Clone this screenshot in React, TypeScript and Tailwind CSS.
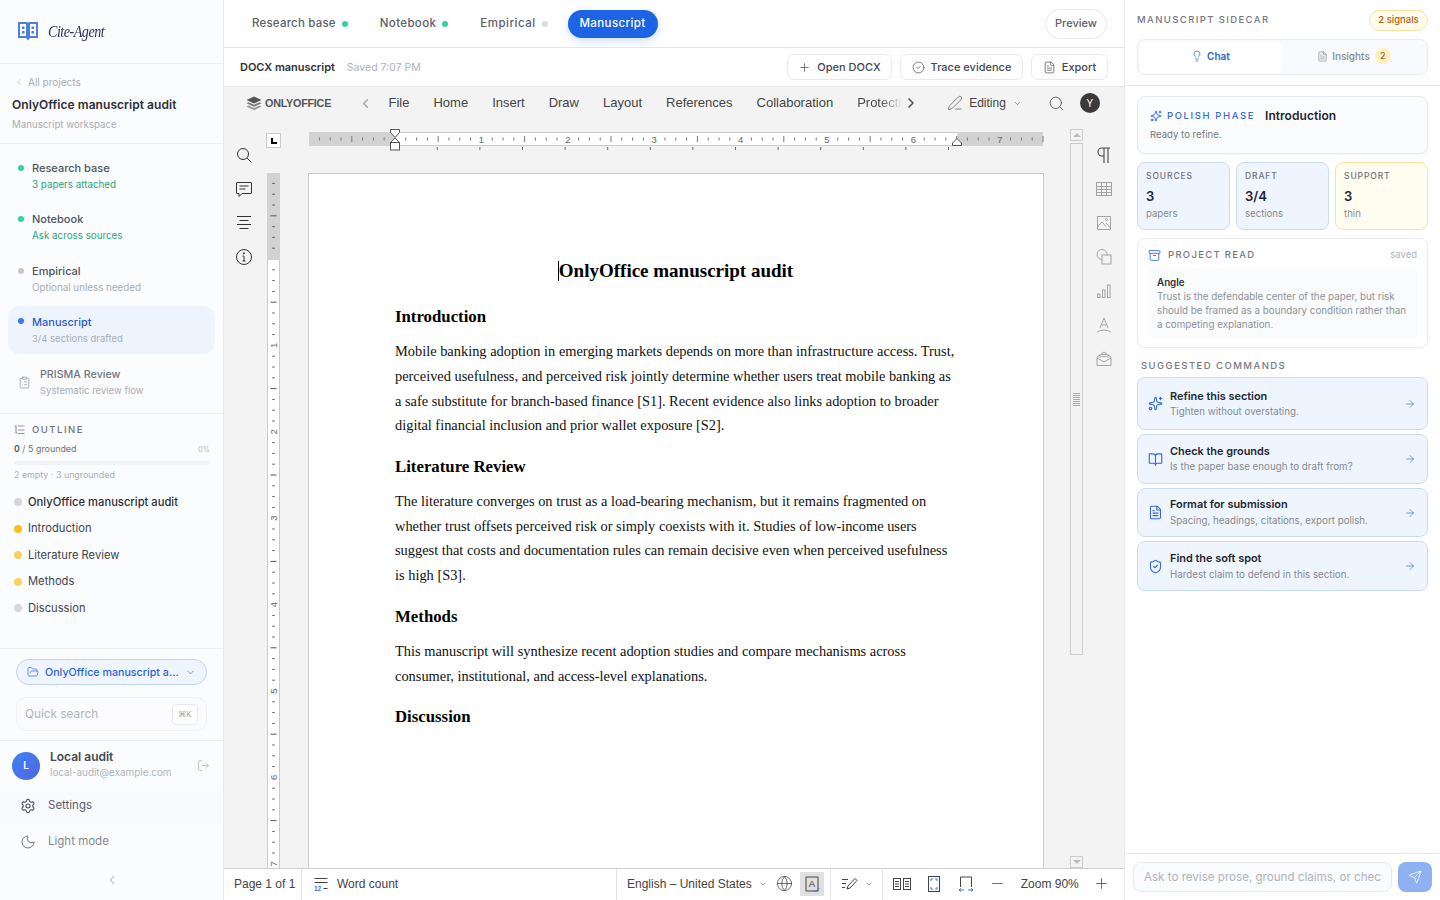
import React from "react";
import {
  ChevronLeft, ChevronRight, ChevronDown, ClipboardList, FolderOpen, LogOut, Settings, Moon, Plus, CircleCheck,
  FileText, Search, Lightbulb, Sparkles, Archive, BookOpen, ArrowRight, ShieldCheck, Send, PenLine, Globe, Minus,
} from "lucide-react";

const tickColor = "#777";

function HRuler() {
  const ticks: React.ReactNode[] = [];
  for (let k = -7; k <= 60; k++) {
    const x = 86 + k * 10.8;
    if (k === 0) continue;
    const m = ((k % 8) + 8) % 8;
    if (m === 0) {
      ticks.push(<text key={k} x={x} y={15.5} textAnchor="middle" fontSize="9.5" fill="#666" fontFamily="Liberation Sans, sans-serif">{k / 8}</text>);
    } else {
      const h = m === 4 ? 6 : 3;
      ticks.push(<line key={k} x1={x} x2={x} y1={12 - h / 2} y2={12 + h / 2} stroke={tickColor} strokeWidth="1" />);
    }
  }
  const tabs: React.ReactNode[] = [];
  for (let m = 0; m <= 12; m++) {
    const x = 128.3 + m * 42.6;
    tabs.push(<line key={m} x1={x} x2={x} y1={20} y2={23} stroke="#666" strokeWidth="1" />);
  }
  return (
    <svg width="736" height="30" viewBox="0 0 736 30" className="block overflow-visible">
      <rect x="0.5" y="5.5" width="733" height="13" fill="#fff" stroke="#cbcbcb" />
      <rect x="0" y="5" width="86" height="14" fill="#d2d2d2" />
      <rect x="648" y="5" width="86" height="14" fill="#d2d2d2" />
      {ticks}
      {tabs}
      <path d="M81.5 2.5h9v3l-4.5 5l-4.5-5z M86 11l4.5 4.5v0h-9z" fill="#fff" stroke="#555" />
      <rect x="81.5" y="15.5" width="9" height="7.5" fill="#fff" stroke="#555" />
      <path d="M648 11.5l4.5 4.5v2.500h-9v-2.500z" fill="#fff" stroke="#555" />
    </svg>
  );
}

function VRuler() {
  const ticks: React.ReactNode[] = [];
  for (let k = -7; k <= 56; k++) {
    const y = 86 + k * 10.8;
    if (k === 0) continue;
    const m = ((k % 8) + 8) % 8;
    if (m === 0) {
      ticks.push(<text key={k} x={0} y={0} transform={`translate(9.5 ${y}) rotate(-90)`} textAnchor="middle" fontSize="9.5" fill="#666" fontFamily="Liberation Sans, sans-serif">{k / 8}</text>);
    } else {
      const w = m === 4 ? 6 : 2.5;
      ticks.push(<line key={k} x1={6.5 - w / 2} x2={6.5 + w / 2} y1={y} y2={y} stroke="#555" strokeWidth="1" />);
    }
  }
  return (
    <svg width="13" height="696" viewBox="0 0 13 696" className="block">
      <rect x="0.5" y="0" width="12" height="696" fill="#fff" stroke="#cbcbcb" />
      <rect x="0" y="0" width="13" height="87" fill="#d2d2d2" />
      {ticks}
    </svg>
  );
}

const ic = { fill: "none", stroke: "#555", strokeWidth: 1 } as const;

function RailIcon({ children, faded }: { children: React.ReactNode; faded?: boolean }) {
  return (
    <svg width="20" height="20" viewBox="0 0 20 20" className={faded ? "opacity-50" : ""} {...ic}>
      {children}
    </svg>
  );
}

const NAV = [
  { t: "Research base", s: "3 papers attached", c: "bg-[#34d399]", sc: "text-[#2aa57c]", tc: "text-[#4b5563]" },
  { t: "Notebook", s: "Ask across sources", c: "bg-[#34d399]", sc: "text-[#2aa57c]", tc: "text-[#4b5563]" },
  { t: "Empirical", s: "Optional unless needed", c: "bg-[#c4c6cc]", sc: "text-[#a8adb5]", tc: "text-[#4b5563]" },
];

const OUTLINE = [
  { t: "OnlyOffice manuscript audit", c: "bg-[#d5d7dc]", b: true },
  { t: "Introduction", c: "bg-[#fbbf24]" },
  { t: "Literature Review", c: "bg-[#fcd05c]" },
  { t: "Methods", c: "bg-[#fcd05c]" },
  { t: "Discussion", c: "bg-[#d5d7dc]" },
];

function Sidebar() {
  return (
    <aside className="w-[224px] h-[900px] shrink-0 bg-[#fbfcfe] border-r border-[#e8eaee] flex flex-col">
      <div className="h-[64px] shrink-0 border-b border-[#eceef2] flex items-center pl-[17px] gap-[9px]">
        <svg width="22" height="22" viewBox="0 0 22 22" className="mt-[-1px]">
          <path d="M1 2h8.5c.8 0 1.5.5 1.5 1.2C11 2.500 11.700 2 12.500 2H21v16h-8l-2 2.500L9 18H1z" fill="#4a7fdc" />
          <rect x="3" y="4" width="6" height="12" fill="#fff" />
          <rect x="13" y="4" width="6" height="12" fill="#fff" />
          <rect x="5" y="6.500" width="2.500" height="2.500" fill="#4a7fdc" />
          <rect x="5" y="11" width="2.500" height="2.500" fill="#4a7fdc" />
          <rect x="14.500" y="6.500" width="2.500" height="2.500" fill="#4a7fdc" />
          <rect x="14.500" y="11" width="2.500" height="2.500" fill="#4a7fdc" />
        </svg>
        <span className="[font-family:'Liberation_Serif',serif] italic text-[17px] text-[#2c3258] tracking-[-0.6px] scale-x-[0.83] origin-left">Cite-Agent</span>
      </div>
      <div className="h-[80px] shrink-0 border-b border-[#eceef2] pl-[12px] pt-[11px]">
        <div className="flex items-center gap-[4px] h-[14px] pl-[2px] text-[10px] text-[#a8adb5]">
          <ChevronLeft size={10} strokeWidth={1.5} />
          <span>All projects</span>
        </div>
        <div className="mt-[8px] text-[12px] leading-[16px] font-semibold text-[#2b2f38] tracking-[0.05px]">OnlyOffice manuscript audit</div>
        <div className="mt-[5px] text-[9.700px] leading-[14px] text-[#a8adb5]">Manuscript workspace</div>
      </div>
      <div className="h-[270px] shrink-0 border-b border-[#eceef2] px-[8px] pt-[16px] flex flex-col">
        {NAV.map((n) => (
          <div key={n.t} className="h-[51.300px] shrink-0 flex pl-[10px] pt-[1px]">
            <span className={`w-[6px] h-[6px] rounded-full mt-[4px] ${n.c}`} />
            <div className="ml-[8px]">
              <div className={`text-[11px] leading-[15px] font-medium ${n.tc}`}>{n.t}</div>
              <div className={`mt-[1px] text-[9.800px] leading-[15px] ${n.sc}`}>{n.s}</div>
            </div>
          </div>
        ))}
        <div className="h-[48px] shrink-0 rounded-[12px] bg-[#edf4fe] flex pl-[10px] pt-[9px] mt-[-8px]">
          <span className="w-[6px] h-[6px] rounded-full mt-[3px] bg-[#3b78ee]" />
          <div className="ml-[8px]">
            <div className="text-[11px] leading-[15px] font-medium text-[#2a5ccf]">Manuscript</div>
            <div className="mt-[1px] text-[9.500px] leading-[15px] text-[#a8adb5]">3/4 sections drafted</div>
          </div>
        </div>
        <div className="flex items-center pl-[10px] mt-[13px] gap-[9px]">
          <ClipboardList size={13} strokeWidth={1.3} className="text-[#8d929b]" />
          <div>
            <div className="text-[10.700px] leading-[15px] font-medium text-[#70757e]">PRISMA Review</div>
            <div className="mt-[1px] text-[9.500px] leading-[15px] text-[#a8adb5]">Systematic review flow</div>
          </div>
        </div>
      </div>
      <div className="h-[235px] shrink-0 border-b border-[#eceef2] px-[14px] pt-[9px]">
        <div className="flex items-center gap-[7px] h-[14px]">
          <svg width="11" height="10" viewBox="0 0 11 10" fill="none" stroke="#8d929b" strokeWidth="1.100">
            <path d="M0.500 1h2M4 1h6.500M2 1v7h1.500M4 5h6.500M4 8.500h6.500" />
          </svg>
          <span className="text-[9.500px] font-medium tracking-[1.500px] text-[#6d727b]">OUTLINE</span>
        </div>
        <div className="flex items-end justify-between mt-[4px] h-[14px]">
          <span className="text-[8.900px] text-[#6d727b]"><span className="font-semibold text-[#555a63]">0</span> / 5 grounded</span>
          <span className="text-[7.5px] text-[#b5b9c0] mr-[-1px]">0%</span>
        </div>
        <div className="h-[4px] rounded-full bg-[#f0f1f4] mt-[6px] mr-0" />
        <div className="text-[8.900px] leading-[14px] text-[#a8adb5] mt-[3px]">2 empty · 3 ungrounded</div>
        <div className="mt-[7px] flex flex-col">
          {OUTLINE.map((o) => (
            <div key={o.t} className="h-[26.500px] flex items-center gap-[6px]">
              <span className={`w-[8px] h-[8px] rounded-full ${o.c}`} />
              <span className={`text-[11.200px] ${o.b ? "font-medium text-[#2b2f38]" : "text-[#3f444d]"}`}>{o.t}</span>
            </div>
          ))}
        </div>
      </div>
      <div className="h-[92px] shrink-0 border-b border-[#eceef2] px-[16px] pt-[10px]">
        <div className="h-[26px] rounded-full border border-[#bfd4f6] bg-[#eff5fe] flex items-center pl-[10px] pr-[10px] gap-[6px]">
          <FolderOpen size={12} strokeWidth={1.5} className="text-[#3f72d8]" />
          <span className="flex-1 text-[10.700px] pt-[2px] font-medium text-[#2f62cf] whitespace-nowrap">OnlyOffice manuscript a...</span>
          <ChevronDown size={11} strokeWidth={1.5} className="text-[#3f72d8]" />
        </div>
        <div className="h-[34px] mt-[12px] rounded-[10px] border border-[#f1f2f5] bg-[#fbfbfd] flex items-center justify-between pl-[8px] pr-[8px]">
          <span className="text-[11.800px] pt-[2px] text-[#b0b4bb]">Quick search</span>
          <span className="w-[26px] h-[21px] rounded-[4px] border border-[#e5e7eb] bg-white flex items-center justify-center text-[8px] text-[#a0a4ac]">⌘K</span>
        </div>
      </div>
      <div className="flex-1 relative">
        <div className="flex items-center pl-[12px] pr-[13px] pt-[10px]">
          <div className="w-[28px] h-[28px] rounded-full bg-gradient-to-br from-[#3b82f6] to-[#4f66e0] flex items-center justify-center text-white text-[10px] font-semibold">L</div>
          <div className="ml-[10px] flex-1 mt-[-2px]">
            <div className="text-[12px] leading-[15px] font-semibold text-[#444851]">Local audit</div>
            <div className="text-[9.900px] leading-[15px] mt-[1px] text-[#b0b4bb]">local-audit@example.com</div>
          </div>
          <LogOut size={13} strokeWidth={1.3} className="text-[#a8adb5]" />
        </div>
        <div className="mt-[8px] h-[36px] flex items-center pl-[20px] gap-[12px] bg-[#f9fafd]">
          <Settings size={16} strokeWidth={1.6} className="text-[#454a54]" />
          <span className="text-[11.500px] text-[#5b6069]">Settings</span>
        </div>
        <div className="h-[36px] flex items-center pl-[20px] gap-[12px]">
          <Moon size={16} strokeWidth={1.5} className="text-[#70757e]" />
          <span className="text-[11.500px] text-[#85898f]">Light mode</span>
        </div>
        <div className="flex justify-center mt-[13px]">
          <ChevronLeft size={14} strokeWidth={1.5} className="text-[#8d929b]" />
        </div>
      </div>
    </aside>
  );
}

function TopBar() {
  return (
    <div className="h-[48px] shrink-0 border-b border-[#e6e7ea] flex items-center justify-between pl-[28px] pr-[17px]">
      <div className="flex items-center text-[11.500px] font-medium text-[#5b6069] tracking-[0.2px]">
        <span>Research base</span>
        <span className="w-[6px] h-[6px] rounded-full bg-[#34d399] ml-[6px]" />
        <span className="ml-[32px] tracking-[0.35px]">Notebook</span>
        <span className="w-[6px] h-[6px] rounded-full bg-[#34d399] ml-[6px]" />
        <span className="ml-[32px] tracking-[0.5px]">Empirical</span>
        <span className="w-[6px] h-[6px] rounded-full bg-[#dadbdf] ml-[6px]" />
        <span className="ml-[20px] h-[28px] w-[90px] flex items-center justify-center rounded-full bg-[#1d63e4] text-white tracking-[0.4px] shadow-[0_3px_8px_rgba(29,99,228,0.22)]">Manuscript</span>
      </div>
      <span className="h-[30px] w-[62px] flex items-center justify-center rounded-full border border-[#e5e7eb] text-[11px] font-medium text-[#5b6069]">Preview</span>
    </div>
  );
}

function SubBar() {
  const btn = "h-[26px] rounded-[7px] border border-[#e8e9ec] flex items-center justify-center gap-[6px] text-[11px] font-medium text-[#43474f]";
  return (
    <div className="h-[39px] shrink-0 border-b border-[#e6e7ea] flex items-center justify-between pl-[16px] pr-[16px]">
      <div className="flex items-baseline gap-[12px]">
        <span className="text-[11px] font-semibold text-[#30343c] tracking-[-0.03px]">DOCX manuscript</span>
        <span className="text-[10.500px] text-[#adb1b8]">Saved 7:07 PM</span>
      </div>
      <div className="flex items-center gap-[8px]">
        <span className={`${btn} w-[105px]`}><Plus size={13} strokeWidth={1.5} className="text-[#5b6069]" />Open DOCX</span>
        <span className={`${btn} w-[123px]`}><CircleCheck size={13} strokeWidth={1.3} className="text-[#43474f]" />Trace evidence</span>
        <span className={`${btn} w-[77px]`}><FileText size={13} strokeWidth={1.3} className="text-[#43474f]" />Export</span>
      </div>
    </div>
  );
}

function EditorTabs() {
  return (
    <div className="h-[32px] shrink-0 flex items-center pl-[22px] [font-family:'Liberation_Sans',sans-serif] text-[13px] text-[#444]">
      <div className="w-[113px] flex items-center gap-[3px]">
        <svg width="16" height="15" viewBox="0 0 16 15">
          <path d="M8 0.500L15.500 4L8 7.500L0.500 4z" fill="#555" />
          <path d="M2.500 6.300L0.500 7.300L8 10.800L15.500 7.300L13.500 6.300L8 8.800z" fill="#777" />
          <path d="M2.500 9.600L0.500 10.600L8 14.200L15.500 10.600L13.500 9.600L8 12.100z" fill="#999" />
        </svg>
        <span className="text-[10.800px] font-bold text-[#555] tracking-[-0.25px]">ONLYOFFICE</span>
      </div>
      <ChevronLeft size={15} strokeWidth={2.500} className="text-[#aaa] mr-[15.500px] ml-[-1px]" />
      <div className="flex items-center gap-[24px]">
        <span>File</span><span>Home</span><span>Insert</span><span>Draw</span><span>Layout</span><span>References</span><span>Collaboration</span>
        <span className="w-[45px] whitespace-nowrap bg-gradient-to-r from-[#444] from-50% to-[#f3f3f3] bg-clip-text text-transparent">Protecti</span>
      </div>
      <ChevronRight size={16} strokeWidth={2.500} className="text-[#555] ml-[1px]" />
      <PenLine size={16} strokeWidth={1} className="text-[#444] ml-[28px]" />
      <span className="ml-[6px] text-[12px]">Editing</span>
      <ChevronDown size={9} strokeWidth={1.500} className="ml-[7.500px] text-[#555]" />
      <Search size={17} strokeWidth={1} className="ml-[26px] text-[#333]" />
      <span className="ml-[14.500px] w-[20px] h-[20px] rounded-full bg-[#3a3a3a] text-white text-[10px] flex items-center justify-center">Y</span>
    </div>
  );
}

function DocHeading({ children, cls }: { children: React.ReactNode; cls: string }) {
  return <div className={`text-[16.800px] leading-[24px] font-bold text-black ${cls}`}>{children}</div>;
}

function Paragraph({ lines, cls }: { lines: string[]; cls: string }) {
  return (
    <div className={`${cls} text-[14.400px] leading-[24.670px] text-[#111]`}>
      {lines.map((l) => <div key={l} className="whitespace-nowrap">{l}</div>)}
    </div>
  );
}

function Page() {
  return (
    <div className="w-[736px] h-[760px] shrink-0 bg-white border border-[#cbcbcb] pl-[86px] [font-family:'Liberation_Serif',serif] relative">
      <div className="text-[19px] leading-[24px] font-bold text-black text-center pr-[86px] mt-[85px] relative">
        OnlyOffice manuscript audit
        <span className="absolute left-[163px] top-[2px] w-px h-[20px] bg-black" />
      </div>
      <DocHeading cls="mt-[22px]">Introduction</DocHeading>
      <Paragraph cls="mt-[10.300px]" lines={[
        "Mobile banking adoption in emerging markets depends on more than infrastructure access. Trust,",
        "perceived usefulness, and perceived risk jointly determine whether users treat mobile banking as",
        "a safe substitute for branch-based finance [S1]. Recent evidence also links adoption to broader",
        "digital financial inclusion and prior wallet exposure [S2].",
      ]} />
      <DocHeading cls="mt-[17.020px]">Literature Review</DocHeading>
      <Paragraph cls="mt-[10px]" lines={[
        "The literature converges on trust as a load-bearing mechanism, but it remains fragmented on",
        "whether trust offsets perceived risk or simply coexists with it. Studies of low-income users",
        "suggest that costs and documentation rules can remain decisive even when perceived usefulness",
        "is high [S3].",
      ]} />
      <DocHeading cls="mt-[17.320px]">Methods</DocHeading>
      <Paragraph cls="mt-[10px]" lines={[
        "This manuscript will synthesize recent adoption studies and compare mechanisms across",
        "consumer, institutional, and access-level explanations.",
      ]} />
      <DocHeading cls="mt-[16.660px]">Discussion</DocHeading>
    </div>
  );
}

function RightRail() {
  return (
    <div className="w-[40px] shrink-0 flex flex-col items-center pt-[26px] gap-[14px]">
      <svg width="20" height="20" viewBox="0 0 20 20" fill="none" stroke="#444" strokeWidth="1.100">
        <path d="M16 3H8a4 4 0 0 0 0 8h2M10 3v15M14 3v15" />
      </svg>
      <RailIcon faded><rect x="2.500" y="3.500" width="15" height="13" /><path d="M2.500 7.500h15M2.500 10.500h15M2.500 13.500h15M7.500 3.500v13M12.500 3.500v13" /></RailIcon>
      <RailIcon faded><rect x="3.500" y="3.500" width="13" height="13" /><path d="M3.500 14l4.500-5 4 4.500M12 10l4.500 5" /><circle cx="12.500" cy="6.500" r="1" /></RailIcon>
      <RailIcon faded><circle cx="8" cy="7.500" r="5" /><rect x="8" y="8" width="9" height="9" fill="#f3f3f3" /></RailIcon>
      <RailIcon faded><rect x="3.500" y="13" width="2.500" height="3.500" /><rect x="8.500" y="9" width="2.500" height="7.500" /><rect x="13.500" y="4" width="2.500" height="12.500" /></RailIcon>
      <RailIcon faded><path d="M6 13l4-10 4 10M7.500 10h5M3 17c4-2.500 10-2.500 14 0" /></RailIcon>
      <RailIcon faded><path d="M3 8l7-5 7 5v8.500H3zM3 9l7 4 7-4" /><path d="M6 9V5.500h8V9M7.500 7.500h5" /></RailIcon>
    </div>
  );
}

function ScrollBar() {
  return (
    <div className="w-[13px] shrink-0 h-[739px] flex flex-col items-stretch ml-[26px] mt-[-44px]">
      <div className="h-[12px] border border-[#cbcbcb] flex items-center justify-center">
        <span className="border-x-[4px] border-x-transparent border-b-[4px] border-b-[#bbb]" />
      </div>
      <div className="h-[512px] mt-[2px] border border-[#cbcbcb] flex items-center justify-center">
        <span className="w-[7px] h-[13px] bg-[repeating-linear-gradient(to_bottom,#aaa_0,#aaa_1px,transparent_1px,transparent_2px)]" />
      </div>
      <div className="flex-1" />
      <div className="h-[12px] border border-[#cbcbcb] flex items-center justify-center">
        <span className="border-x-[4px] border-x-transparent border-t-[4px] border-t-[#bbb]" />
      </div>
    </div>
  );
}

function Editor() {
  return (
    <div className="flex-1 min-h-0 bg-[#f3f3f3] flex flex-col overflow-hidden">
      <EditorTabs />
      <div className="flex-1 min-h-0 flex overflow-hidden">
        <div className="w-[40px] shrink-0 flex flex-col items-center pt-[26px] gap-[14px] text-[#444]">
          <RailIcon><circle cx="9" cy="9" r="5.500" stroke="#333" /><path d="M13 13l4.500 4.500" stroke="#333" /></RailIcon>
          <RailIcon><path d="M3 3.500h14a.5.5 0 0 1 .5.5v10a.5.5 0 0 1-.5.5H8L5 17.500v-3H3a.5.5 0 0 1-.5-.5V4a.5.5 0 0 1 .5-.5zM5.500 7h9M5.500 10h6" stroke="#333" /></RailIcon>
          <RailIcon><path d="M3 3.500h14M5.500 7.500h9M3 11.500h14M5.500 15.500h9" stroke="#333" /></RailIcon>
          <RailIcon><circle cx="10" cy="10" r="7.500" stroke="#333" /><path d="M10 9v5M8.500 9H10M8.500 14h3" stroke="#333" /><circle cx="10" cy="6.300" r=".6" fill="#333" stroke="#333" /></RailIcon>
        </div>
        <div className="flex-1 min-w-0 flex flex-col">
          <div className="flex h-[54px] shrink-0">
            <div className="w-[15px] h-[15px] mt-[14px] ml-[2px] border border-[#cbcbcb] bg-white flex items-center justify-center shrink-0">
              <span className="w-[6px] h-[6px] border-l-[2px] border-b-[2px] border-black" />
            </div>
            <div className="ml-[28px] mt-[8px]"><HRuler /></div>
          </div>
          <div className="flex flex-1 min-h-0">
            <div className="ml-[3px] w-[13px] shrink-0"><VRuler /></div>
            <div className="ml-[28px]"><Page /></div>
            <ScrollBar />
          </div>
        </div>
        <RightRail />
      </div>
    </div>
  );
}

function StatusBar() {
  const divider = "w-px h-[32px] bg-[#e4e4e4] shrink-0 mb-[-2px]";
  return (
    <div className="h-[32px] shrink-0 bg-white border-t border-[#d0d0d0] flex items-center pb-[2px] [font-family:'Liberation_Sans',sans-serif] text-[12px] text-[#444]">
      <span className="ml-[10px] w-[67px]">Page 1 of 1</span>
      <span className={divider} />
      <svg width="14" height="14" viewBox="0 0 14 14" className="ml-[12px]" fill="none" stroke="#444">
        <path d="M0.500 1.500h13M0.500 5.500h13M9.500 11.500h4" />
        <text x="0" y="13.500" fontSize="6.500" fill="#3f72d8" stroke="none" fontFamily="Liberation Sans, sans-serif" fontWeight="700">12</text>
      </svg>
      <span className="ml-[9px] w-[279px]">Word count</span>
      <span className={divider} />
      <span className="ml-[10px]">English – United States</span>
      <ChevronDown size={8} strokeWidth={1.800} className="ml-[7px] text-[#555]" />
      <Globe size={17} strokeWidth={1} className="ml-[9px] text-[#333]" />
      <span className="ml-[7px] w-[24px] h-[24px] bg-[#e0e0e0] flex items-center justify-center">
        <svg width="18" height="18" viewBox="0 0 18 18" fill="none" stroke="#444">
          <rect x="3" y="2" width="12" height="14" />
          <text x="9" y="12" textAnchor="middle" fontSize="9.500" fill="#333" stroke="none" fontFamily="Liberation Sans, sans-serif">A</text>
          <path d="M10.500 15l2 2 4-4" stroke="#3f72d8" />
        </svg>
      </span>
      <span className={`${divider} ml-[6px]`} />
      <svg width="18" height="16" viewBox="0 0 18 16" className="ml-[10px]" fill="none" stroke="#444">
        <path d="M1 3.500h6M1 7.500h4M1 11.500h3M6 13l1-3L14 2.500l2 2L9 12z" />
      </svg>
      <ChevronDown size={8} strokeWidth={1.800} className="ml-[6px] text-[#555]" />
      <span className={`${divider} ml-[9px]`} />
      <svg width="18" height="14" viewBox="0 0 18 14" className="ml-[10px]" fill="none" stroke="#444">
        <rect x="0.500" y="1.500" width="7" height="11" /><rect x="10.500" y="1.500" width="7" height="11" />
        <path d="M2 4.500h4M2 7h4M2 9.500h4M12 4.500h4M12 7h4M12 9.500h4" />
      </svg>
      <svg width="14" height="16" viewBox="0 0 14 16" className="ml-[16px]" fill="none" stroke="#444">
        <rect x="1.500" y="0.500" width="11" height="15" />
        <path d="M4 5V3h2M8 3h2v2M4 11v2h2M8 13h2v-2" stroke="#3f72d8" />
      </svg>
      <svg width="16" height="16" viewBox="0 0 16 16" className="ml-[17px]" fill="none" stroke="#444">
        <path d="M2.500 11V1h11v10" />
        <path d="M1 14h5M10 14h5M3 12.500L1 14l2 1.500M13 12.500l2 1.500-2 1.500" stroke="#3f72d8" />
      </svg>
      <Minus size={17} strokeWidth={1} className="ml-[15px] text-[#333]" />
      <span className="ml-[15px]">Zoom 90%</span>
      <Plus size={17} strokeWidth={1} className="ml-[14px] text-[#333]" />
    </div>
  );
}

const COMMANDS = [
  { t: "Refine this section", s: "Tighten without overstating.", i: Sparkles, h: "h-[53px]", m: "mt-[1px]" },
  { t: "Check the grounds", s: "Is the paper base enough to draft from?", i: BookOpen, h: "h-[50px]", m: "mt-[1px]" },
  { t: "Format for submission", s: "Spacing, headings, citations, export polish.", i: FileText, h: "h-[49px]", m: "mt-[2px]" },
  { t: "Find the soft spot", s: "Hardest claim to defend in this section.", i: ShieldCheck, h: "h-[50px]", m: "mt-[2px]" },
];

function Stat({ l, v, s, amber }: { l: string; v: string; s: string; amber?: boolean }) {
  return (
    <div className={`rounded-[8px] border pl-[8px] pt-[7px] h-[68px] ${amber ? "border-[#f8e3a3] bg-[#fffdf0]" : "border-[#c9dcf6] bg-[#eff5fe]"}`}>
      <div className="text-[8.500px] leading-[12px] tracking-[0.9px] text-[#6d727b] font-medium">{l}</div>
      <div className="mt-[5px] text-[13px] leading-[18px] font-semibold text-[#1f2430]">{v}</div>
      <div className="mt-[2px] text-[9.600px] leading-[14px] text-[#85898f]">{s}</div>
    </div>
  );
}

function RightPanel() {
  return (
    <aside className="w-[316px] h-[900px] shrink-0 bg-white border-l border-[#e6e7ea] flex flex-col">
      <div className="h-[86px] shrink-0 border-b border-[#e9eaee] pl-[12px] pr-[12px] pt-[10px]">
        <div className="flex items-center justify-between h-[21px]">
          <span className="text-[9.500px] font-medium tracking-[1.400px] text-[#74787f]">MANUSCRIPT SIDECAR</span>
          <span className="h-[21px] w-[59px] rounded-full border border-[#f8e3a3] bg-[#fffbeb] flex items-center justify-center text-[9.500px] font-medium text-[#b45f0e]">2 signals</span>
        </div>
        <div className="mt-[8px] h-[36px] rounded-[8px] border border-[#e9ebf0] bg-[#f8fafd] flex p-[1px]">
          <div className="w-[143px] rounded-[6px] bg-white flex items-center justify-center gap-[4px] pb-[2px] text-[10px] font-semibold text-[#2f62cf]">
            <Lightbulb size={12} strokeWidth={1.500} className="text-[#3f72d8]" />Chat
          </div>
          <div className="flex-1 flex items-center justify-center gap-[4px] pb-[2px] text-[10px] font-medium text-[#85898f]">
            <FileText size={11} strokeWidth={1.500} className="text-[#85898f]" />Insights
            <span className="w-[16px] h-[16px] rounded-full bg-[#fdf0c4] flex items-center justify-center text-[9px] text-[#b45f0e] ml-[1px]">2</span>
          </div>
        </div>
      </div>
      <div className="pl-[12px] pr-[12px] pt-[10px] flex flex-col">
        <div className="h-[58px] rounded-[8px] border border-[#e6e8ee] bg-[#fbfcfe] pl-[12px] pt-[10px] shadow-[0_1px_2px_rgba(0,0,0,0.03)]">
          <div className="flex items-center h-[18px]">
            <Sparkles size={12} strokeWidth={2} className="text-[#3f72d8]" />
            <span className="ml-[5px] text-[9.500px] font-medium tracking-[1.600px] text-[#3a6ad6]">POLISH PHASE</span>
            <span className="ml-[10px] text-[12px] font-semibold text-[#23272f] tracking-[0.05px]">Introduction</span>
          </div>
          <div className="mt-[3px] text-[9.600px] leading-[14px] text-[#74787f]">Ready to refine.</div>
        </div>
        <div className="grid grid-cols-3 gap-[6px] mt-[8px]">
          <Stat l="SOURCES" v="3" s="papers" />
          <Stat l="DRAFT" v="3/4" s="sections" />
          <Stat l="SUPPORT" v="3" s="thin" amber />
        </div>
        <div className="h-[110px] mt-[8px] rounded-[8px] border border-[#e9ebf0] px-[10px] pt-[9px] shadow-[0_1px_2px_rgba(0,0,0,0.03)]">
          <div className="flex items-center justify-between h-[15px]">
            <div className="flex items-center gap-[7px]">
              <Archive size={13} strokeWidth={1.700} className="text-[#3f72d8]" />
              <span className="text-[9.500px] font-medium tracking-[1.300px] text-[#74787f]">PROJECT READ</span>
            </div>
            <span className="text-[9.500px] text-[#b0b4bb]">saved</span>
          </div>
          <div className="mt-[5px] h-[70px] rounded-[4px] bg-[#fafbfc] pl-[9px] pt-[8px] text-[9.800px] leading-[14px] text-[#8d9199]">
            <div className="font-semibold text-[#30343c]">Angle</div>
            <div>Trust is the defendable center of the paper, but risk</div>
            <div>should be framed as a boundary condition rather than</div>
            <div>a competing explanation.</div>
          </div>
        </div>
        <div className="mt-[11px] pl-[4px] text-[9.500px] leading-[14px] font-medium tracking-[1.450px] text-[#74787f]">SUGGESTED COMMANDS</div>
        <div className="mt-[4px] flex flex-col gap-[4px]">
          {COMMANDS.map((c) => {
            const I = c.i;
            return (
              <div key={c.t} className={`${c.h} rounded-[8px] border border-[#c9dcf6] bg-[#eff5fe] flex items-center pl-[10px] pr-[11px]`}>
                <I size={15} strokeWidth={1.800} className="text-[#3a6ad6]" />
                <div className="ml-[7px] flex-1">
                  <div className="text-[10.900px] leading-[15px] font-semibold text-[#23272f]">{c.t}</div>
                  <div className={`${c.m} text-[9.750px] leading-[14px] text-[#85898f]`}>{c.s}</div>
                </div>
                <ArrowRight size={12} strokeWidth={1.500} className="text-[#4a7fdc]" />
              </div>
            );
          })}
        </div>
      </div>
      <div className="mt-auto h-[47px] border-t border-[#e9eaee] flex items-start pl-[8px] pr-[8px] pt-[8px] gap-[6px]">
        <div className="flex-1 h-[30px] rounded-[8px] border border-[#e6e8ee] bg-[#fafbfc] flex items-center pl-[10px] overflow-hidden">
          <span className="text-[11.600px] pt-[2px] text-[#b0b4bb] whitespace-nowrap">Ask to revise prose, ground claims, or chec</span>
        </div>
        <div className="w-[34px] h-[30px] rounded-[8px] bg-[#8fb1f2] flex items-center justify-center">
          <Send size={14} strokeWidth={1.300} className="text-white" />
        </div>
      </div>
    </aside>
  );
}

export default function App() {
  return (
    <div className="w-[1440px] h-[900px] overflow-hidden flex [font-family:'Inter',sans-serif] bg-white">
      <Sidebar />
      <main className="w-[900px] shrink-0 h-[900px] flex flex-col">
        <TopBar />
        <SubBar />
        <Editor />
        <StatusBar />
      </main>
      <RightPanel />
    </div>
  );
}
